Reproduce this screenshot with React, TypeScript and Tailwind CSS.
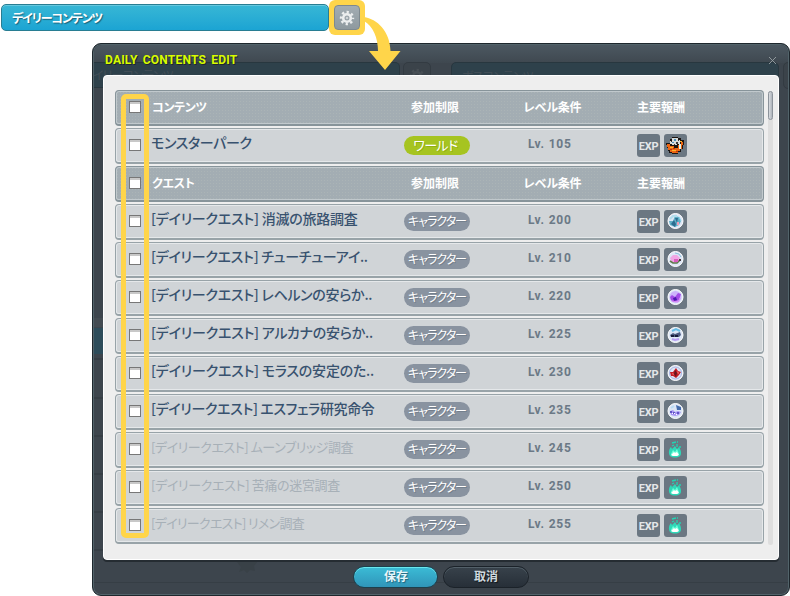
import { Fragment } from "react";
import clsx from "clsx";

type Reward = "monster" | "lake" | "pink" | "violet" | "arcana" | "moras" | "esfera" | "flame";

interface Item {
  name: string;
  scope: "world" | "character";
  level: number;
  reward: Reward;
  tracking: string;
  disabled?: boolean;
}

interface Section {
  title: string;
  items: Item[];
}

const SECTIONS: Section[] = [
  {
    title: "コンテンツ",
    items: [
      { name: "モンスターパーク", scope: "world", level: 105, reward: "monster", tracking: "tracking-[-0.35px]" },
    ],
  },
  {
    title: "クエスト",
    items: [
      { name: "[デイリークエスト] 消滅の旅路調査", scope: "character", level: 200, reward: "lake", tracking: "tracking-[-0.23px]" },
      { name: "[デイリークエスト] チューチューアイ..", scope: "character", level: 210, reward: "pink", tracking: "tracking-[-0.27px]" },
      { name: "[デイリークエスト] レヘルンの安らか..", scope: "character", level: 220, reward: "violet", tracking: "tracking-[-0.25px]" },
      { name: "[デイリークエスト] アルカナの安らか..", scope: "character", level: 225, reward: "arcana", tracking: "tracking-[-0.22px]" },
      { name: "[デイリークエスト] モラスの安定のた..", scope: "character", level: 230, reward: "moras", tracking: "tracking-[-0.22px]" },
      { name: "[デイリークエスト] エスフェラ研究命令", scope: "character", level: 235, reward: "esfera", tracking: "tracking-[-0.35px]" },
      { name: "[デイリークエスト] ムーンブリッジ調査", scope: "character", level: 245, reward: "flame", tracking: "tracking-[-0.45px]", disabled: true },
      { name: "[デイリークエスト] 苦痛の迷宮調査", scope: "character", level: 250, reward: "flame", tracking: "tracking-[-0.35px]", disabled: true },
      { name: "[デイリークエスト] リメン調査", scope: "character", level: 255, reward: "flame", tracking: "tracking-[-0.7px]", disabled: true },
    ],
  },
];

const GRID = "grid h-9 grid-cols-[13px_9px_243px_86px_110px_1fr] rounded-[4px] border pl-[13px]";

export default function App() {
  return (
    <div className="relative h-[596px] w-[790px] overflow-hidden bg-white font-['Liberation_Sans','Noto_Sans_CJK_JP',sans-serif]">
      <div className="flex h-[43px] items-start">
        <div className="mt-1 ml-px flex h-[27px] w-[328px] items-center rounded-[5px] border border-[#287d92] bg-linear-to-b from-[#37b7d5] to-[#1ba4d3] pl-[10px] shadow-[inset_0_1px_0_#66c8df]">
          <span className="font-['Noto_Sans_CJK_JP',sans-serif] text-[12px] leading-none font-bold tracking-[-1.15px] text-white [font-feature-settings:'palt'] [text-shadow:1px_1px_1px_#17627a]">
            デイリーコンテンツ
          </span>
        </div>
        <div className="flex h-[35px] w-[36px] items-center justify-center rounded-[6px] bg-[#ffd54a]">
          <div className="flex h-[25px] w-[26px] items-center justify-center rounded-[4px] border border-[#7e898f] bg-linear-to-b from-[#a3adb3] to-[#8e999f]">
            <Gear color="#eceeef" />
          </div>
        </div>
      </div>

      <DailyEditDialog />

      {/* Pointer from the gear to the dialog */}
      <svg className="absolute top-[14px] left-[363px]" width="40" height="58" viewBox="0 0 40 58">
        <path d="M1 3C14 5 27 17 27.500 37H37.500L22 56L6 37H15C15 24 10 12 1 7Z" fill="#ffd54a" />
      </svg>
    </div>
  );
}

function DailyEditDialog() {
  return (
    <div className="relative ml-[92px] flex h-[553px] w-[698px] flex-col overflow-hidden rounded-[9px] border border-[#1e272d] bg-[#3d454d] shadow-[inset_0_0_0_1px_#52636a]">
      <Backdrop />

      <header className="relative flex h-[31px] shrink-0 items-start justify-between pt-[8px] pr-[12px] pl-[12px]">
        <h1 className="font-[Roboto,sans-serif] text-[12px] leading-[16px] font-bold tracking-[0.2px] text-[#d8fc00] [text-shadow:1px_1px_0_#20282b] [word-spacing:2px]">
          DAILY CONTENTS EDIT
        </h1>
        <button className="mt-[4px]" aria-label="close">
          <svg width="9" height="9" viewBox="0 0 9 9">
            <path d="M1 1L8 8M8 1L1 8" stroke="#98a1a5" strokeWidth="0.9" />
          </svg>
        </button>
      </header>

      <main className="relative ml-[10px] flex h-[485px] w-[676px] shrink-0 rounded-[4px] border border-white bg-[#eeeeee] pt-[14px] pl-[11px] shadow-[0_2px_0_#252c32]">
        <div className="flex w-[649px] flex-col gap-[2px]">
          {SECTIONS.map((section) => (
            <Fragment key={section.title}>
              <SectionHeader title={section.title} />
              {section.items.map((item) => (
                <ItemRow key={item.name} item={item} />
              ))}
            </Fragment>
          ))}
        </div>
        <div className="mt-px ml-[4px] h-[454px] w-[5px] rounded-full bg-[#dedede]">
          <div className="h-[29px] rounded-full border border-[#8c939b] bg-linear-to-r from-[#d9dce0] to-[#aeb4bb]" />
        </div>

        {/* Checkbox column highlight */}
        <div className="absolute top-[18px] left-[17px] h-[444px] w-[28px] rounded-[5px] border-5 border-[#ffd54a]" />
      </main>

      <footer className="relative flex justify-center gap-[5px] pt-[6px]">
        <button className="h-[22px] w-[85px] rounded-full border border-[#1d3f4c] bg-linear-to-b from-[#3bbcd6] to-[#3095b9] pl-[1px] text-[12px] leading-[20px] font-bold text-[#e5f6fb] shadow-[inset_0_1px_0_#69e8ee] [text-shadow:1px_1px_1px_#20657e]">
          保存
        </button>
        <button className="h-[22px] w-[86px] rounded-full border border-[#1b2229] bg-linear-to-b from-[#38424b] to-[#272f38] text-[12px] leading-[20px] font-bold text-[#d0d9de] shadow-[inset_0_1px_0_#536069] [text-shadow:1px_1px_1px_#10151a]">
          取消
        </button>
      </footer>
    </div>
  );
}

// Dimmed page that shows faintly through the dialog frame
function Backdrop() {
  return (
    <div className="absolute inset-px overflow-hidden rounded-[8px]">
      <div className="absolute inset-x-0 top-0 h-[18px] bg-linear-to-b from-[#4c5861] to-[#3f4850]" />
      <div className="absolute top-[17px] left-0 h-[26px] w-[306px] rounded-r-[5px] border border-l-0 border-[#28373f] bg-[#2e414b]" />
      <div className="absolute top-[24px] left-[-1px] font-['Noto_Sans_CJK_JP',sans-serif] text-[12px] leading-[12px] tracking-[-0.9px] text-[#414d56] [font-feature-settings:'palt']">
        イリーコンテンツ
      </div>
      <div className="absolute top-[17px] left-[309px] flex h-[27px] w-[28px] items-center justify-center rounded-[5px] border border-[#333b42] bg-[#3b434a]">
        <Gear color="#484f55" />
      </div>
      <div className="absolute top-[17px] left-[357px] h-[26px] w-[328px] rounded-[5px] border border-[#28373f] bg-[#2e414b]" />
      <div className="absolute top-[25px] left-[368px] font-['Noto_Sans_CJK_JP',sans-serif] text-[12px] leading-[12px] tracking-[-0.9px] text-[#414d56] [font-feature-settings:'palt']">
        ボスコンテンツ
      </div>
      <div className="absolute top-[17px] left-[689px] h-[27px] w-[28px] rounded-[5px] border border-[#333b42] bg-[#3b434a]" />
      <div className="absolute top-[273px] left-0 h-[9px] w-[11px] bg-[#434b52]" />
      <div className="absolute top-[283px] left-0 h-[26px] w-[11px] bg-[#2d4c5a]" />
      {[313, 352, 390, 428, 466, 504].map((top) => (
        <div key={top} className="absolute left-0 h-[2px] w-[11px] bg-[#363e45]" style={{ top }} />
      ))}
      <div className="absolute inset-x-0 top-[537px] h-px bg-[#363e45]" />
      <svg className="absolute top-[516px] left-[143px]" width="20" height="13" viewBox="0 0 20 13">
        <path d="M0 1H20L17 5L18 10L13 9L10 12L7 9L2 11L4 6Z" fill="#394147" />
      </svg>
    </div>
  );
}

function SectionHeader({ title }: { title: string }) {
  return (
    <div
      className={clsx(
        GRID,
        "border-[#87949a] border-b-2 bg-[#a3adb3] bg-[radial-gradient(#abb4b6_25%,transparent_26%)] bg-size-[3px_3px] font-['Noto_Sans_CJK_JP',sans-serif] text-[12px] leading-[32px] font-bold text-white shadow-[inset_0_0_0_1px_#c1c9cd]",
      )}
    >
      <Checkbox />
      <span />
      <span className="pl-[1px] tracking-[-0.3px] [font-feature-settings:'palt']">{title}</span>
      <span className="pl-[17px]">参加制限</span>
      <span className="pl-[43px] tracking-[-0.4px] whitespace-nowrap">レベル条件</span>
      <span className="pl-[47px]">主要報酬</span>
    </div>
  );
}

function ItemRow({ item }: { item: Item }) {
  return (
    <div className={clsx(GRID, "border-[#98a3a8] border-b-2 bg-[#d0d4d7] shadow-[inset_0_0_0_1px_#e5e8ea]")}>
      <Checkbox />
      <span />
      <span
        className={clsx(
          "font-['Noto_Sans_CJK_JP',sans-serif] whitespace-nowrap [font-feature-settings:'palt']",
          item.tracking,
          item.disabled
            ? "text-[13px] leading-[28px] font-normal text-[#a7b0b7]"
            : "text-[14px] leading-[26px] font-medium text-[#38526f]",
        )}
      >
        {item.name}
      </span>
      <span className="pt-[7px] pl-[10px]">
        <ScopeBadge scope={item.scope} />
      </span>
      <span className="pl-[48px] font-[Roboto,sans-serif] text-[12px] leading-[31px] font-bold tracking-[0.8px] whitespace-nowrap text-[#6b7986]">
        Lv. {item.level}
      </span>
      <span className="flex gap-[4px] pt-[5px] pl-[47px]">
        <span className="flex h-[23px] w-[23px] items-center justify-center rounded-[3px] bg-[#6b7782] pt-[2px] font-[Roboto,sans-serif] text-[11px] leading-none font-bold tracking-[-0.3px] text-[#e4e7e9]">
          EXP
        </span>
        <span className="flex h-[23px] w-[23px] items-center justify-center rounded-[3px] bg-[#6b7782]">
          <RewardIcon kind={item.reward} />
        </span>
      </span>
    </div>
  );
}

function Checkbox() {
  return (
    <span className="mt-[10px] h-3 w-3 border border-[#777777] bg-white shadow-[inset_0_2px_0_#c8c8c8]" />
  );
}

function ScopeBadge({ scope }: { scope: Item["scope"] }) {
  return (
    <span
      className={clsx(
        "flex h-[19px] w-[66px] justify-center rounded-full font-['Noto_Sans_CJK_JP',sans-serif] leading-[18px] whitespace-nowrap text-white [font-feature-settings:'palt']",
        scope === "world"
          ? "bg-[#a6c420] pr-[3px] text-[13px] tracking-[-0.6px] [text-shadow:1px_1px_0_#93b012]"
          : "bg-[#8993a0] text-[12px] tracking-[-1px] [text-shadow:1px_1px_0_#747f8c]",
      )}
    >
      {scope === "world" ? "ワールド" : "キャラクター"}
    </span>
  );
}

function Gear({ color }: { color: string }) {
  return (
    <svg width="16" height="16" viewBox="0 0 16 16" fill="none" stroke={color}>
      <circle cx="8" cy="8" r="3.8" strokeWidth="2.6" />
      <circle cx="8" cy="8" r="6" strokeWidth="2.4" strokeDasharray="2.3 2.412" strokeDashoffset="1.15" />
      <circle cx="8" cy="8" r="0.8" strokeWidth="0.8" />
    </svg>
  );
}

function RewardIcon({ kind }: { kind: Reward }) {
  if (kind === "monster") {
    return (
      <svg width="19" height="19" viewBox="0 0 19 19" shapeRendering="crispEdges">
        <path d="M6 1H12V2H15V4H18V9H17V13H15V16H12V18H6V17H3V15H2V12H1V9H0V7H4V3H6Z" fill="#1c1511" />
        <path d="M1 8H4V10H8V12H12V9H15V6H17V9H16V13H14V15H12V17H6V16H4V14H2V11H1Z" fill="#ee6511" />
        <path d="M6 2H12V4H14V8H11V9H6V8H4V5H6Z" fill="#dadddb" />
        <path d="M8 3H10V5H8ZM6 6H8V7H6Z" fill="#4c90ba" />
        <path d="M10 6H12V8H10ZM5 5H6V6H5ZM8 8H9V9H8ZM12 4H13V5H12Z" fill="#3a3a3a" />
        <path d="M4 11H7V12H4ZM6 14H10V15H6ZM14 5H16V6H14Z" fill="#ffb62a" />
        <path d="M7 12H9V13H7ZM4 13H6V14H4ZM10 15H12V16H10Z" fill="#b93508" />
        <path d="M13 8H15V13H13Z" fill="#dff6ee" />
      </svg>
    );
  }

  if (kind === "flame") {
    return (
      <svg width="17" height="19" viewBox="0 0 17 19">
        <path d="M3 16C1 13 2 9 4 7L5 9L8 6L10 9L12 7C14 10 15 14 13 16C10 18 6 18 3 16Z" fill="#2fd8b8" />
        <path d="M4 14L6 10L8 12L10 9L12 14L10 16H5Z" fill="#6effda" />
        <path d="M4 15L7 12L8 13L10 12L12 15L10 16H6Z" fill="#ffffff" />
        <path d="M5 3L9 2M10 4V7M12 7H14M5 6L7 5M10 2H11" stroke="#20d5b3" strokeWidth="1.3" />
      </svg>
    );
  }

  return (
    <svg width="17" height="17" viewBox="0 0 17 17">
      <circle cx="8.5" cy="8" r="7.5" fill="#dce6f6" stroke="#ffffff" />
      {kind === "lake" && (
        <>
          <path d="M2 8L6 8L8 3L12 4L14 8L12 12L8 14L3 12Z" fill="#5fafc6" />
          <path d="M4 11L7 7L9 11L8 14ZM8 5L10 10L11 5Z" fill="#2c6c90" />
          <path d="M10 9H12V12H10Z" fill="#ef9eb8" />
          <path d="M3 6L6 3H10" stroke="#b1ddec" strokeWidth="2" fill="none" />
          <path d="M12 4L14 8" stroke="#8fd4e8" />
        </>
      )}
      {kind === "pink" && (
        <>
          <path d="M3 7L6 4L10 4L13 7L11 12L5 12Z" fill="#f0a6e4" />
          <path d="M3 10L6 12L10 12L13 9" stroke="#5f7a4d" strokeWidth="1.6" fill="none" />
          <path d="M7 8H11V11H7Z" fill="#dc5abf" />
          <path d="M8 2L12 3L14 6" stroke="#88bdda" fill="none" />
          <path d="M12 8H14V10H12Z" fill="#47383b" />
        </>
      )}
      {kind === "violet" && (
        <>
          <circle cx="8.500" cy="8" r="6" fill="#cdb3fb" />
          <path d="M3 8L5 6L8 8L11 4L14 5L12 11L7 13L4 11Z" fill="#a24be6" />
          <path d="M6 9L9 8L10 11L7 12Z" fill="#4b18ad" />
          <path d="M5 12L11 13L13 9" stroke="#d885f3" fill="none" />
        </>
      )}
      {kind === "arcana" && (
        <>
          <path d="M3 8L6 6L8 7L13 5L14 8L12 10L4 10Z" fill="#4d5a80" />
          <path d="M5 4L9 2L13 4" stroke="#69bce5" strokeWidth="2" fill="none" />
          <path d="M5 12L8 13L12 12" stroke="#b79bf3" strokeWidth="2" fill="none" />
          <path d="M4 8H7V10H4ZM8 8H11V10H8Z" fill="#171c38" />
        </>
      )}
      {kind === "moras" && (
        <>
          <circle cx="8.5" cy="8" r="6" fill="none" stroke="#a9b4e4" />
          <path d="M3 7L6 7L9 3L11 6L14 7L12 10L9 13L6 11L4 11Z" fill="#c51d27" />
          <path d="M8 5L10 8L9 12L7 9Z" fill="#66151e" />
          <path d="M5 8L7 9L6 10ZM10 6L12 8L11 9Z" fill="#ff8e85" />
        </>
      )}
      {kind === "esfera" && (
        <>
          <path d="M9 2L14 4V7L10 7Z" fill="#466dac" />
          <path d="M3 8L6 7L8 9L11 8L14 9L12 12L8 13L4 12Z" fill="#a996f4" />
          <path d="M3 8H5V10H3ZM6 9H8V11H6ZM10 9H12V11H10Z" fill="#6155c5" />
          <path d="M4 5L7 3" stroke="#b7dbf5" strokeWidth="2" />
          <path d="M7 10H8V11H7ZM9 11H10V12H9ZM5 10H6V11H5Z" fill="#ffffff" />
        </>
      )}
    </svg>
  );
}
